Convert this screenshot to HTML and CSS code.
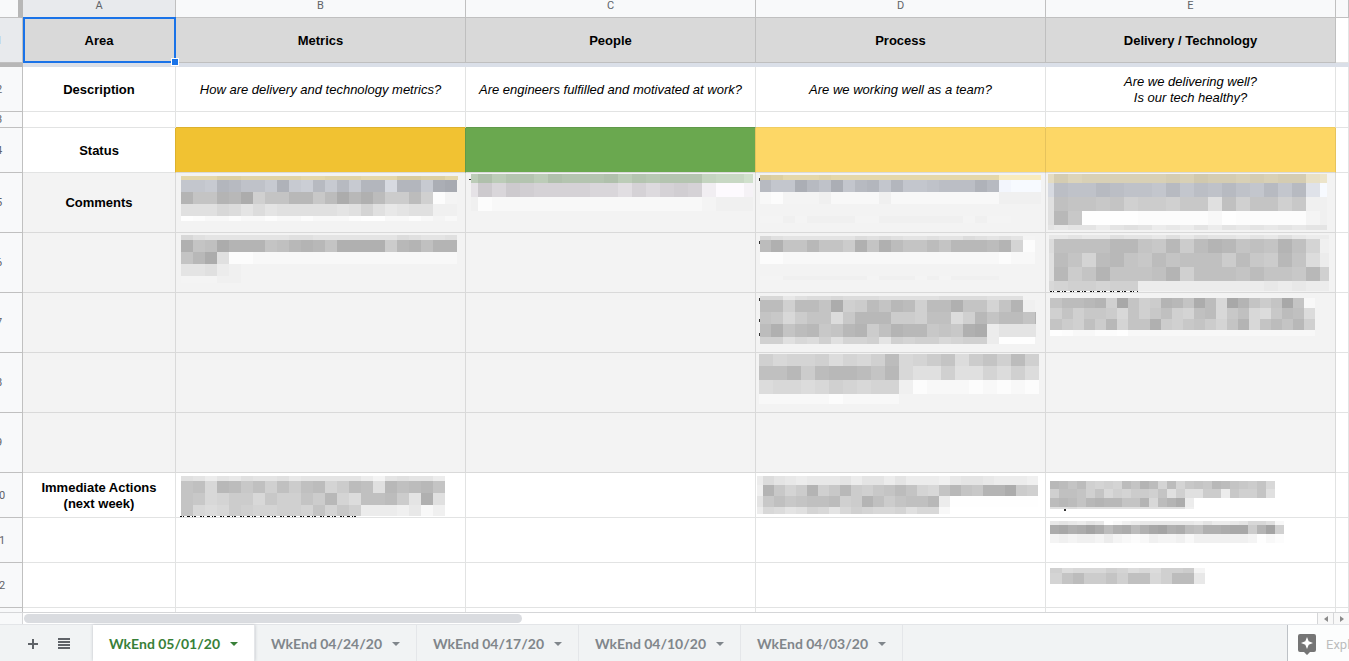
FILE: index.html
```html
<!DOCTYPE html>
<html lang="en">
<head>
<meta charset="utf-8">
<title>Weekly status</title>
<link rel="stylesheet" href="styles.css">
</head>
<body>
<main class="sheet">
<table class="grid">
<colgroup><col class="col-num"><col class="col-area"><col class="col-data"><col class="col-data"><col class="col-data"><col class="col-data"><col></colgroup>
<thead>
<tr class="letters"><th class="corner"></th><th class="current">A</th><th>B</th><th>C</th><th>D</th><th>E</th><th></th></tr>
</thead>
<tbody>
<tr class="r45 titles"><th class="num current">1</th><td class="selected">Area<span class="handle"></span></td><td>Metrics</td><td>People</td><td>Process</td><td>Delivery / Technology</td><td class="blank"></td></tr>
<tr class="freeze"><th></th><td colspan="6"></td></tr>
<tr class="r45 description"><th class="num">2</th><td class="label">Description</td><td>How are delivery and technology metrics?</td><td>Are engineers fulfilled and motivated at work?</td><td>Are we working well as a team?</td><td>Are we delivering well?<br>Is our tech healthy?</td><td></td></tr>
<tr class="r16"><th class="num">3</th><td></td><td class="over-gold"></td><td class="over-green"></td><td class="over-yellow"></td><td class="over-yellow"></td><td></td></tr>
<tr class="r45"><th class="num">4</th><td class="label before-gold">Status</td><td class="gold"></td><td class="green"></td><td class="yellow"></td><td class="yellow"></td><td></td></tr>
<tr class="r60 shaded"><th class="num">5</th><td class="label">Comments</td><td data-note="B5"></td><td data-note="C5"></td><td data-note="D5"></td><td data-note="E5"></td><td class="blank"></td></tr>
<tr class="r60 shaded"><th class="num">6</th><td></td><td data-note="B6"></td><td></td><td data-note="D6"></td><td data-note="E6"></td><td class="blank"></td></tr>
<tr class="r60 shaded"><th class="num">7</th><td></td><td></td><td></td><td data-note="D7"></td><td data-note="E7"></td><td class="blank"></td></tr>
<tr class="r60 shaded"><th class="num">8</th><td></td><td></td><td></td><td data-note="D8"></td><td></td><td class="blank"></td></tr>
<tr class="r60 shaded"><th class="num">9</th><td></td><td></td><td></td><td></td><td></td><td class="blank"></td></tr>
<tr class="r45"><th class="num">10</th><td class="label">Immediate Actions<br>(next week)</td><td data-note="B10"></td><td></td><td data-note="D10"></td><td data-note="E10"></td><td></td></tr>
<tr class="r45"><th class="num">11</th><td></td><td></td><td></td><td></td><td data-note="E11"></td><td></td></tr>
<tr class="r45"><th class="num">12</th><td></td><td></td><td></td><td></td><td data-note="E12"></td><td></td></tr>
<tr class="r45"><th class="num"></th><td></td><td></td><td></td><td></td><td></td><td></td></tr>
</tbody>
</table>
</main>
<div class="scroller">
<div class="scroll-corner"></div>
<div class="track"><div class="thumb"></div></div>
<button class="step" aria-label="Scroll left"><svg width="4" height="6" viewBox="0 0 4 6"><path d="M4 0v6L0 3z"/></svg></button>
<button class="step" aria-label="Scroll right"><svg width="4" height="6" viewBox="0 0 4 6"><path d="M0 0v6l4-3z"/></svg></button>
</div>
<footer class="bar">
<div class="tools">
<button aria-label="Add sheet"><svg width="12" height="12" viewBox="0 0 12 12"><path d="M5 1h2v4h4v2H7v4H5V7H1V5h4z"/></svg></button>
<button aria-label="All sheets"><svg width="12" height="12" viewBox="0 0 12 12"><path d="M0 0h12v2H0zM0 3h12v2H0zM0 6h12v2H0zM0 9h12v2H0z"/></svg></button>
</div>
<nav class="tabs">
<button class="tab active">WkEnd 05/01/20<span class="caret"></span></button>
<button class="tab">WkEnd 04/24/20<span class="caret"></span></button>
<button class="tab">WkEnd 04/17/20<span class="caret"></span></button>
<button class="tab">WkEnd 04/10/20<span class="caret"></span></button>
<button class="tab">WkEnd 04/03/20<span class="caret"></span></button>
</nav>
<button class="explore"><svg width="18" height="21" viewBox="0 0 18 21"><path fill="#757575" d="M2 0h14a2 2 0 0 1 2 2v14a2 2 0 0 1-2 2h-4l-3 3-3-3H2a2 2 0 0 1-2-2V2a2 2 0 0 1 2-2z"/><path fill="#fff" d="M9 3l1.700 4.300L15 9l-4.300 1.700L9 15l-1.700-4.300L3 9l4.300-1.700z"/></svg><span>Explore</span></button>
</footer>
<script src="notes.js"></script>
</body>
</html>
```

FILE: styles.css
```css
* { box-sizing: border-box; }
body {
  margin: 0;
  height: 100vh;
  display: flex;
  flex-direction: column;
  overflow: hidden;
  background: #fff;
  font-family: "Liberation Sans", Arial, sans-serif;
  color: #000;
}
button { border: 0; padding: 0; background: none; font: inherit; color: inherit; }
.sheet { flex: 1; min-height: 0; overflow: hidden; }

/* The grid is scrolled slightly past its top left corner. */
.grid {
  margin: -7px 0 0 -24px;
  width: calc(100% + 24px);
  table-layout: fixed;
  border-collapse: separate;
  border-spacing: 0;
  font-size: 13px;
  line-height: 16px;
}
.col-num { width: 47px; }
.col-area { width: 153px; }
.col-data { width: 290px; }
.grid td, .grid th {
  padding: 0;
  text-align: center;
  vertical-align: middle;
  border: 0 solid #e2e3e3;
  border-width: 0 1px 1px 0;
}
.grid th {
  background: #f8f9fa;
  border-color: #c0c0c0;
  color: #5f6368;
  font: 11px/14px Roboto, sans-serif;
}
.grid th.current { background: #e8eaed; }
.grid .letters th { height: 25px; padding-top: 2px; }
.letters .corner { border-right: 5px solid #b7b7b7; }
.r16 td, .r16 th { height: 16px; }
.r45 td, .r45 th { height: 45px; }
.grid .r45 td, .grid .r45 th { padding-top: 2px; }
.r60 td, .r60 th { height: 60px; }
.titles td { background: #d9d9d9; font-weight: bold; border-color: #bfbfbf; }
.grid td.blank { background: #fff; border-color: #e2e3e3; }
.freeze td, .freeze th { height: 4px; border: 0; font-size: 0; line-height: 0; }
.grid .freeze th { background: #b7b7b7; }
.freeze td { background: #dadfe8; }
.description td { font-style: italic; }
.grid td.label { font-weight: bold; font-style: normal; }
.shaded td { background: #f3f3f3; border-color: #d9d9d9; }
.grid .over-gold { border-bottom-color: #dcb12e; }
.grid .over-green { border-bottom-color: #60994a; }
.grid .over-yellow { border-bottom-color: #f0cd61; }
.grid .before-gold { border-right-color: #dcb12e; }
.grid .gold { background: #f1c232; border-right-color: #60994a; border-bottom-color: #d9d9d9; }
.grid .green { background: #6aa84f; border-right-color: #e6c35c; border-bottom-color: #d9d9d9; }
.grid .yellow { background: #fdd766; border-right-color: #e6c35c; border-bottom-color: #d9d9d9; }
.grid tr td[data-note] { vertical-align: top; padding-top: 0; }
.note { display: block; width: 100%; }

.selected { position: relative; }
.selected::after {
  content: "";
  position: absolute;
  inset: -1px -1px -1px 0;
  border: 2px solid #1a73e8;
}
.handle {
  position: absolute;
  z-index: 1;
  right: -4px;
  bottom: -4px;
  width: 8px;
  height: 8px;
  background: #1a73e8;
  border: 1px solid #fff;
}

.scroller { height: 13px; display: flex; border-top: 1px solid #d5d6d8; border-bottom: 1px solid #e3e5e8; }
.scroll-corner { width: 23px; background: #f8f9fa; border-right: 1px solid #d5d6d8; }
.track { flex: 1; padding: 1px; }
.thumb { width: 498px; height: 9px; border-radius: 5px; background: #dadce0; }
.step {
  width: 16px;
  display: flex;
  align-items: center;
  justify-content: center;
  background: #f8f8f8;
  border-left: 1px solid #d5d6d8;
  fill: #8a8a8a;
}

.bar { height: 36px; display: flex; background: #f1f3f4; }
.tools { width: 93px; display: flex; align-items: center; gap: 19px; padding: 1px 0 0 27px; fill: #5f6368; }
.tools button { display: flex; }
.tabs { flex: 1; display: flex; }
.tab {
  display: flex;
  align-items: center;
  gap: 10px;
  padding: 1px 16px 0;
  border-right: 1px solid #e4e6e9;
  color: #80868b;
  font: bold 14px/20px Lato, sans-serif;
  white-space: nowrap;
}
.active { background: #fff; color: #388038; box-shadow: 0 0 3px #bdc1c6; }
.caret { border: 4px solid transparent; border-top-color: currentColor; border-bottom: 0; }
.explore {
  width: 62px;
  display: flex;
  align-items: center;
  gap: 10px;
  padding: 3px 0 0 10px;
  overflow: hidden;
  background: #fcfdfd;
  border-left: 1px solid #bdc1c6;
  color: #bdbdbd;
  font: 13px/16px Roboto, sans-serif;
}
.explore svg { flex: none; }
```

FILE: notes.js
```javascript
// Redacted notes. Each letter is a tile shade, from a (dark) to y (white).
// x: left edge, first: first tile width, step: other widths, end: right edge.
// rows: [top, height, tint, shades]; marks: [x, y, width, height].
const tints = {
  n: [0, 0, 0], y: [0, -13, -58], t: [0, -8, -34],
  b: [-1, 2, 9], g: [-8, 8, -12], m: [1, -2, 2]
};
const notes = {
  B5: { x: 5, first: 12, step: 12, end: 282, rows: [
    [3, 4, "y", "rrrppqqqqqrrqqqrrroopprr"], [7, 12, "b", "jjkfgiikeklgkgkffoffkdc"],
    [19, 12, "n", "fjjfgdmjjggkhdgehllhmxv"], [31, 12, "n", "qqqoprprqqqqqrqnqsrqquu"],
    [43, 5, "n", "yxwwxwwxwwxwwwxyywwxwvw"]] },
  B6: { x: 5, first: 12, step: 12, end: 282, rows: [
    [2, 5, "n", "oqrrrrrrrqqrrrrrrrpqrrq"], [7, 12, "n", "ejidfffjigfgjeeeelgfiff"],
    [19, 12, "n", "jgdqxxwwwwwwwwwwwwwwwww"], [31, 12, "n", "rrqtu"], [43, 7, "n", "vvvuu"]] },
  C5: { x: 5, first: 7, step: 14, end: 287, marks: [[3, 6, 2, 1]], rows: [
    [1, 9, "g", "jgjhhjghhhgjhihhhlmmo"], [10, 14, "m", "rlolmnnnnooqnpnmnuxxv"],
    [24, 14, "n", "uxwwwwwwwwwwwwwwwvuuu"]] },
  D5: { x: 4, first: 11, step: 12, end: 285, marks: [[3, 5, 1, 3]], rows: [
    [2, 5, "y", "oprrrqrrrrrrrrrrrrrrwwww"], [7, 12, "b", "gjjdgidjgfjfjjihhhegvwww"],
    [19, 12, "n", "wxvvvuwwwwuwwwwwwwwwuuuu"], [43, 7, "n", "vvuvuuuuvvuuuuuuuvuvv"]] },
  D6: { x: 4, first: 11, step: 12, end: 279, marks: [[3, 8, 1, 3]], rows: [
    [3, 4, "n", "oqrrrrrrpqpqrrqrrpqrqrv"], [7, 12, "n", "hejjgjjlejehjjhjggghfnx"],
    [19, 12, "n", "xxwwwwwwwwwwwwwwwwwwxww"], [43, 4, "n", "vvuuuuuuuvuuuvuvuuuu"]] },
  D7: { x: 4, first: 11, step: 12, end: 280, marks: [[3, 5, 1, 3], [3, 26, 1, 3], [3, 40, 1, 3]], rows: [
    [3, 4, "n", "oosqppopppqqqqqppppqqq"], [7, 12, "n", "hhmhhjdmlhjghmhhejjnjfu"],
    [19, 12, "n", "jkoljjpkgggllmiipmgjhhjf"], [31, 13, "n", "hejhgkjgflifggkjkedtrrrr"],
    [44, 7, "n", "mmqopmqnnmrmnmmonmmtyyy"]] },
  D8: { x: 3, first: 14, step: 14, end: 284, rows: [
    [1, 12, "n", "monnmpnomhonljpljmhm"], [13, 14, "n", "iiglhgghjgoqqmqqnpmp"],
    [27, 14, "n", "poopomnonnuxwwwxwxwx"], [41, 10, "n", "wwwwwxwwww"]] },
  E5: { x: 2, first: 6, step: 14, end: 281, rows: [
    [1, 9, "t", "rnpoooooonomnnononnst"], [10, 14, "b", "ohiighiijgjhigijgjgqw"],
    [24, 14, "n", "qijjkjmllmkkqimjjmkuu"], [38, 14, "n", "qgkyyyyxxxxxwyxxxxxvu"],
    [52, 5, "n", "rsrrtrqrtstrtrsrsrsrr"]] },
  E6: { x: 3, first: 5, step: 14, end: 283, strip: [4, 58, 88], rows: [
    [2, 4, "n", "ssrssqrrsqsqrrsrsqstt"], [6, 14, "n", "piiiiggjkglhfgjijfinu"],
    [20, 14, "n", "qhjnhgjkhjiiilhklgjpt"], [34, 14, "n", "qgljfjjjifmiiijhjjkgm"],
    [48, 10, "n", "onmmnmmtttttttttststt"]] },
  E7: { x: 4, first: 12, step: 11, end: 270, rows: [
    [5, 10, "n", "jhhgfmcjmlfgjdhocfjljcjw"], [15, 11, "n", "mjmkklojmkimnihokiopkhip"],
    [26, 11, "n", "jlmilgnjjelmkjlnjfojhjgm"], [37, 6, "n", "yxwwxxywwwwwwwwwwwwwwwww"]] },
  B10: { x: 5, first: 12, step: 12, end: 270, strip: [4, 43, 180], rows: [
    [3, 5, "n", "qrtrsqrrqsrrrrrtvrqrrt"], [8, 12, "n", "jioghkimilihnlhiqgihgj"],
    [20, 12, "n", "jkonllokmmjlgnpiihlreq"], [32, 11, "n", "jopolmnnmmnjnkmtttuswu"]] },
  D10: { x: 1, first: 6, step: 11, end: 283, rows: [
    [3, 9, "n", "tprstsssrtrrtrtttusrrstttu"], [12, 11, "n", "ufknlfmkglmkjhjnojgjkffdlm"],
    [23, 11, "n", "rkikjiihmlfiljiigtyyyyyyyy"], [34, 7, "n", "toprqnoromnoonqoow"]] },
  E10: { x: 4, first: 9, step: 9, end: 231, marks: [[18, 36, 2, 2]], rows: [
    [8, 8, "n", "ghjhmnmnhjfhnhnkjkghjkljo"], [16, 9, "n", "miijmjomnllmjqmqqlltkmmjq"],
    [25, 9, "n", "hghjgfggjjfohfdt"], [34, 2, "n", "qqpqqqqqqqqqqqqu"]] },
  E11: { x: 4, first: 9, step: 9, end: 240, rows: [
    [3, 4, "n", "srstrsywutsssssstrttsrooqw"], [7, 9, "n", "dcedbdhedhecbedhieedcclfbm"],
    [16, 9, "n", "vuvuuvtvwxwuvvuwuuuuuuvywx"]] },
  E12: { x: 4, first: 12, step: 11, end: 159, rows: [
    [5, 5, "n", "mpooomnpopmmlv"], [10, 11, "n", "njhlljmiiomhhs"]] }
};

function rect(x, y, w, h, fill) {
  return `<rect x="${x}" y="${y}" width="${w}" height="${h}" fill="${fill}"/>`;
}

for (const cell of document.querySelectorAll("[data-note]")) {
  const note = notes[cell.dataset.note];
  let shapes = "";
  for (const [y, h, tint, shades] of note.rows) {
    let x = note.x;
    [...shades].forEach((letter, i) => {
      const level = Math.min(254, 160 + 4 * (letter.charCodeAt(0) - 97));
      const rgb = tints[tint].map(t => Math.min(255, level + t));
      const w = Math.min(i ? note.step : note.first, note.end - x);
      if (w > 0) shapes += rect(x, y, w, h, `rgb(${rgb})`);
      x += w;
    });
  }
  for (const mark of note.marks || []) shapes += rect(...mark, "#333");
  if (note.strip) {
    const [x, y, w] = note.strip;
    shapes += rect(x, y, w, 1, "#fff");
    shapes += `<path d="M${x} ${y + 0.5}h${w}" stroke="#111" stroke-dasharray="2 1 1 3 3 2 1 1 2 4"/>`;
  }
  const height = cell.parentElement.classList.contains("r60") ? 59 : 44;
  cell.innerHTML = `<svg class="note" height="${height}" shape-rendering="crispEdges" aria-hidden="true">${shapes}</svg>`;
}
```
